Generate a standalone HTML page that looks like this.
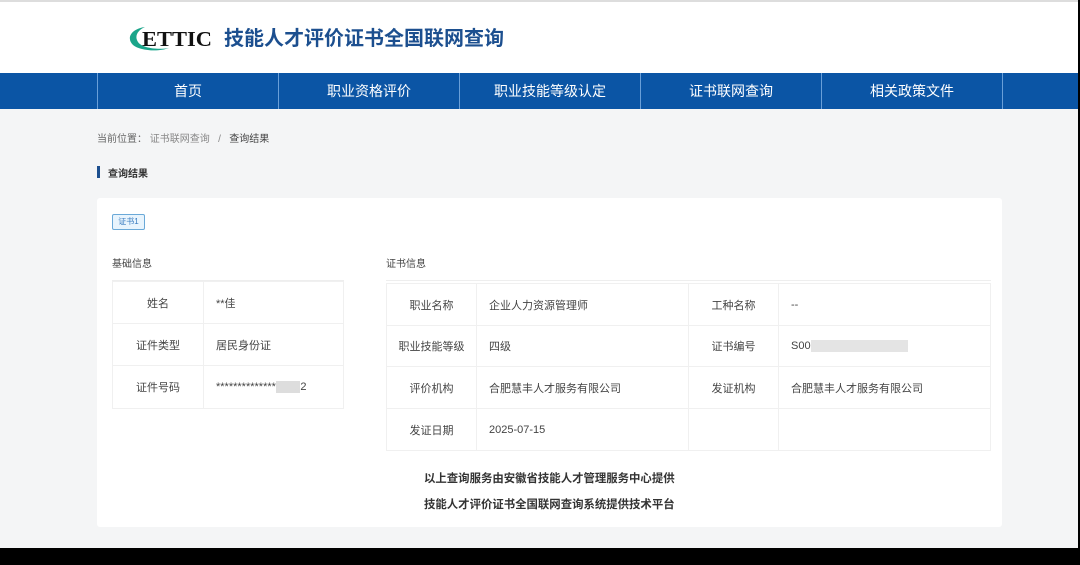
<!DOCTYPE html>
<html><head><meta charset="utf-8"><style>
*{margin:0;padding:0;box-sizing:border-box}
body{width:1080px;height:565px;background:#f4f5f6;font-family:"Liberation Sans","Noto Sans CJK SC",sans-serif;position:relative;overflow:hidden;color:#333}
.hdr{position:absolute;left:0;top:0;width:1080px;height:73px;background:#fff;border-top:2px solid #ddd}
.nav{position:absolute;left:0;top:73px;width:1080px;height:36px;background:#0b55a5}
.nav div{position:absolute;top:0;height:36px;width:181px;border-left:1px solid #6a9fd8;color:#fff;font-size:14px;line-height:36px;text-align:center}
.abs{position:absolute}
.box{position:absolute;left:97px;top:198px;width:905px;height:329px;background:#fff;border-radius:3px}
table{border-collapse:collapse;position:absolute;font-size:11px}
td{border:1px solid #f0f0f0;padding:0 12px;color:#444}
td.l{text-align:center}
</style></head><body>
<div class="hdr">
<svg class="abs" style="left:127px;top:22px" width="90" height="32" viewBox="0 0 90 32">
<path d="M18 3 C4 5 -1 14 6 21 C13 27 32 28 42 24 C30 26 15 24 11 18 C7 12 11 6 18 3Z" fill="#1aa58a"/>
<text x="15" y="22" font-family="Liberation Serif" font-weight="bold" font-size="21" fill="#111" textLength="70" lengthAdjust="spacingAndGlyphs">ETTIC</text>
</svg>
<div class="abs" style="left:224px;top:20px;font-size:20px;font-weight:bold;color:#1c4f8f">技能人才评价证书全国联网查询</div>
</div>
<div class="nav">
<div style="left:97px">首页</div><div style="left:278px">职业资格评价</div><div style="left:459px">职业技能等级认定</div><div style="left:640px">证书联网查询</div><div style="left:821px">相关政策文件</div><div style="left:1002px;width:78px"></div>
</div>
<div class="abs" style="left:1078px;top:0;width:2px;height:565px;background:#000"></div>
<div class="abs" style="left:97px;top:130px;font-size:10px;color:#666">当前位置：<span style="color:#888">&nbsp;证书联网查询&nbsp;&nbsp;&nbsp;/&nbsp;&nbsp;&nbsp;</span><span style="color:#444">查询结果</span></div>
<div class="abs" style="left:97px;top:166px;width:3px;height:12px;background:#1c4f8f"></div>
<div class="abs" style="left:108px;top:165px;font-size:10px;font-weight:bold;color:#333">查询结果</div>
<div class="box"></div>
<div class="abs" style="left:112px;top:214px;width:33px;height:16px;border:1px solid #6aa9d8;background:#e8f4fd;border-radius:2px;font-size:8px;color:#3a7cc0;text-align:center;line-height:14px">证书1</div>
<div class="abs" style="left:112px;top:255px;font-size:10px;color:#444">基础信息</div>
<div class="abs" style="left:386px;top:255px;font-size:10px;color:#444">证书信息</div>
<div class="abs" style="left:112px;top:280px;width:232px;height:1px;background:#eee"></div>
<div class="abs" style="left:386px;top:280px;width:605px;height:1px;background:#eee"></div>
<table style="left:112px;top:281px;width:232px">
<tr style="height:42px"><td class="l" style="width:91px">姓名</td><td>**佳</td></tr>
<tr style="height:42px"><td class="l">证件类型</td><td>居民身份证</td></tr>
<tr style="height:43px"><td class="l">证件号码</td><td>**************<span style="background:#ddd;color:#ddd">0000</span>2</td></tr>
</table>
<table style="left:386px;top:283px;width:605px">
<tr style="height:42px"><td class="l" style="width:90px">职业名称</td><td style="width:212px">企业人力资源管理师</td><td class="l" style="width:90px">工种名称</td><td>--</td></tr>
<tr style="height:41px"><td class="l" style="padding:0">职业技能等级</td><td>四级</td><td class="l">证书编号</td><td>S00<span style="background:#e4e4e4;color:#e4e4e4">0000000000000000</span></td></tr>
<tr style="height:42px"><td class="l">评价机构</td><td>合肥慧丰人才服务有限公司</td><td class="l">发证机构</td><td>合肥慧丰人才服务有限公司</td></tr>
<tr style="height:42px"><td class="l">发证日期</td><td>2025-07-15</td><td></td><td></td></tr>
</table>
<div class="abs" style="left:424px;top:470px;font-size:11.4px;font-weight:bold;color:#333">以上查询服务由安徽省技能人才管理服务中心提供</div>
<div class="abs" style="left:424px;top:496px;font-size:11.4px;font-weight:bold;color:#333">技能人才评价证书全国联网查询系统提供技术平台</div>
<div class="abs" style="left:0;top:548px;width:1080px;height:17px;background:#000"></div>
</body></html>
